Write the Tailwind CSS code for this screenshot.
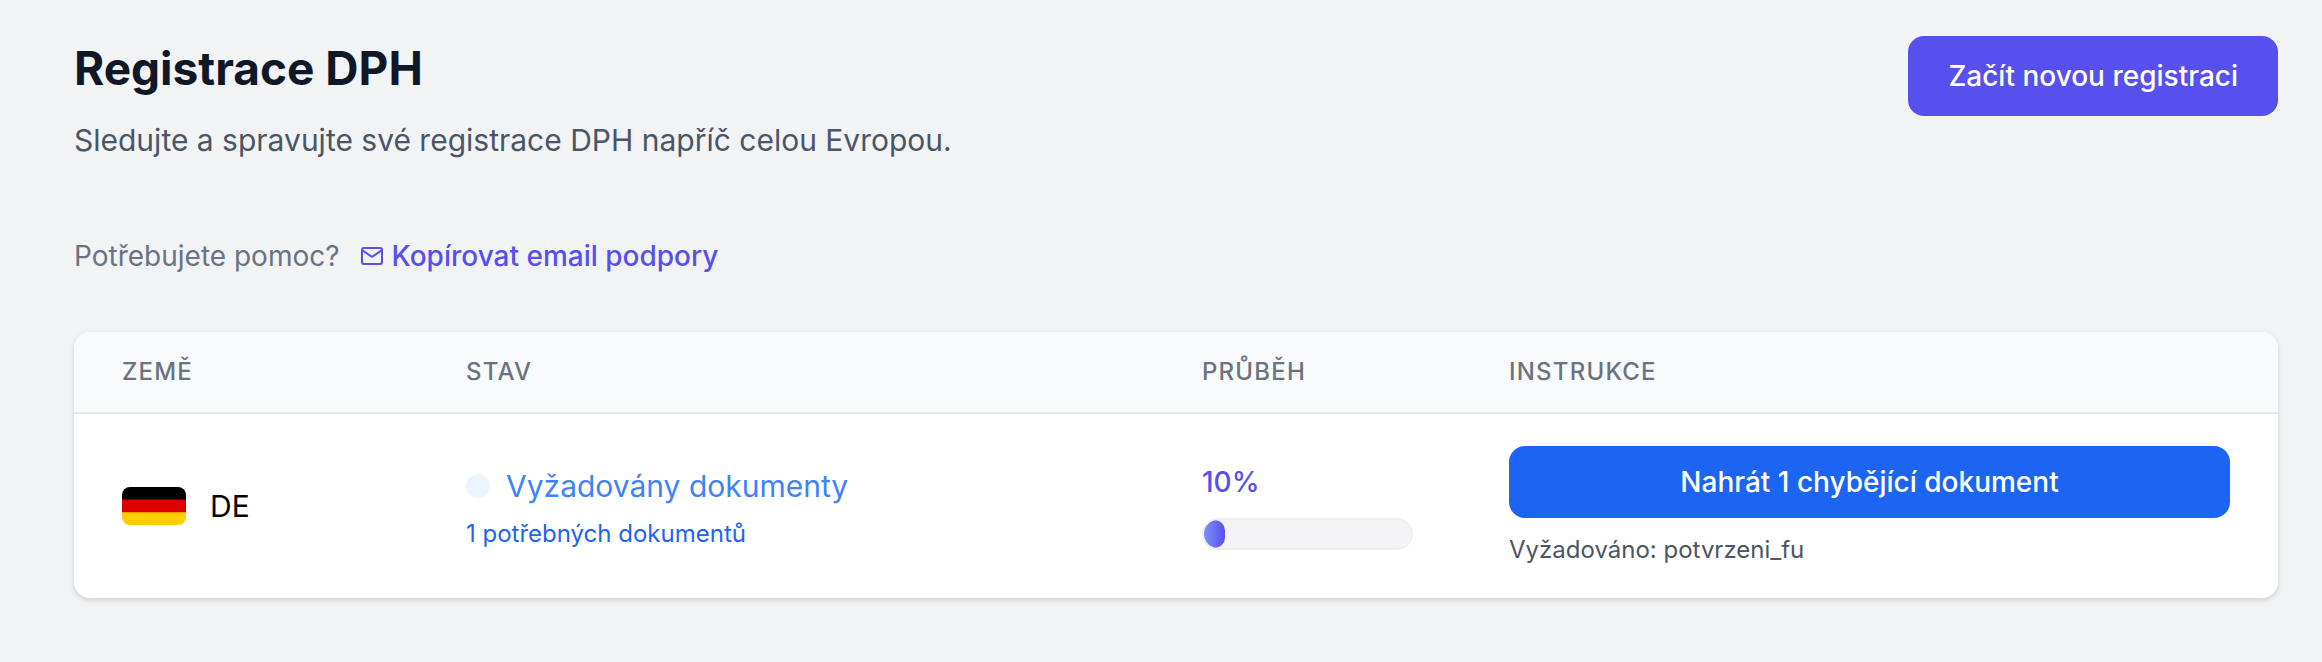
<!DOCTYPE html>
<html lang="cs">
<head>
    <meta charset="UTF-8">
    <meta name="viewport" content="width=device-width, initial-scale=1.0">
    <title>Registrace DPH</title>
    <script src="https://cdn.jsdelivr.net/npm/@tailwindcss/browser@4"></script>
</head>
<body class="min-h-screen bg-[#f2f3f5] font-['Inter','Liberation_Sans',sans-serif] text-black">
    <main class="pt-9 pr-11 pb-16 pl-[74px]">
        <!-- Page header -->
        <header class="flex items-start justify-between">
            <div>
                <h1 class="text-[46px] leading-16 font-bold text-[#101827]">Registrace DPH</h1>
                <p class="mt-4 text-[30px] leading-12 text-[#4b5565]">Sledujte a spravujte své registrace DPH napříč celou Evropou.</p>
            </div>
            <button type="button" class="rounded-2xl bg-[#5850ec] px-10 py-5 text-[28px] leading-10 font-medium text-white">Začít novou registraci</button>
        </header>

        <!-- Support -->
        <div class="mt-18 mb-14 flex items-center gap-5 text-[28px] leading-10">
            <span class="text-[#6b7280]">Potřebujete pomoc?</span>
            <button type="button" class="flex items-center gap-2 font-medium text-[#5850ec]">
                <svg class="h-6 w-6" viewBox="0 0 24 24" fill="none" stroke="currentColor" stroke-width="2" stroke-linecap="round" stroke-linejoin="round" aria-hidden="true">
                    <rect x="2" y="4" width="20" height="16" rx="2"/>
                    <path d="M2.5 6.5l8.4 5.7a2 2 0 0 0 2.2 0l8.4-5.7"/>
                </svg>
                Kopírovat email podpory
            </button>
        </div>

        <!-- Registrations table -->
        <div class="overflow-hidden rounded-2xl bg-white shadow-[0_2px_6px_rgba(0,0,0,0.1),0_2px_4px_rgba(0,0,0,0.06)]">
            <table class="w-full table-fixed text-left">
                <thead class="border-b-2 border-[#e5e7eb] bg-[#f9fafc] text-2xl leading-8 text-[#6b7280] uppercase">
                    <tr>
                        <th scope="col" class="w-[344px] px-12 py-6 font-medium tracking-wider">Země</th>
                        <th scope="col" class="w-[736px] px-12 py-6 font-medium tracking-wider">Stav</th>
                        <th scope="col" class="w-[307px] px-12 py-6 font-medium tracking-wider">Průběh</th>
                        <th scope="col" class="px-12 py-6 font-medium tracking-wider">Instrukce</th>
                    </tr>
                </thead>
                <tbody>
                    <tr>
                        <td class="px-12 py-8">
                            <div class="flex items-center gap-6">
                                <svg class="h-[38px] w-16 rounded-lg" viewBox="0 0 64 38" preserveAspectRatio="none" role="img" aria-label="Německo">
                                    <path fill="#000" d="M0 0h64v13H0z"/>
                                    <path fill="#d00" d="M0 12.5h64V26H0z"/>
                                    <path fill="#ffce00" d="M0 25.3h64V38H0z"/>
                                </svg>
                                <span class="text-[30px] leading-12">DE</span>
                            </div>
                        </td>
                        <td class="px-12 py-8">
                            <div class="flex items-center gap-4 text-[30px] leading-12 text-[#3f83f8]">
                                <span class="size-6 rounded-full bg-[#ebf5ff]"></span>
                                Vyžadovány dokumenty
                            </div>
                            <div class="mt-2 text-2xl leading-8 text-[#1c64f2]">1 potřebných dokumentů</div>
                        </td>
                        <td class="px-12 py-8">
                            <div class="text-[28px] leading-10 font-medium text-[#5850ec]">10%</div>
                            <div class="mt-4 h-8 overflow-hidden rounded-full border-2 border-[#efeff2] bg-[#f4f4f6]">
                                <div class="h-full rounded-full bg-linear-to-r from-[#818cf8] to-[#5850ec]" style="width: 10%"></div>
                            </div>
                        </td>
                        <td class="px-12 py-8">
                            <button type="button" class="block w-full rounded-2xl bg-[#1c64f2] px-8 py-4 text-[28px] leading-10 font-medium text-white">Nahrát 1 chybějící dokument</button>
                            <div class="mt-4 text-2xl leading-8 text-[#4b5563]">Vyžadováno: potvrzeni_fu</div>
                        </td>
                    </tr>
                </tbody>
            </table>
        </div>
    </main>
</body>
</html>
